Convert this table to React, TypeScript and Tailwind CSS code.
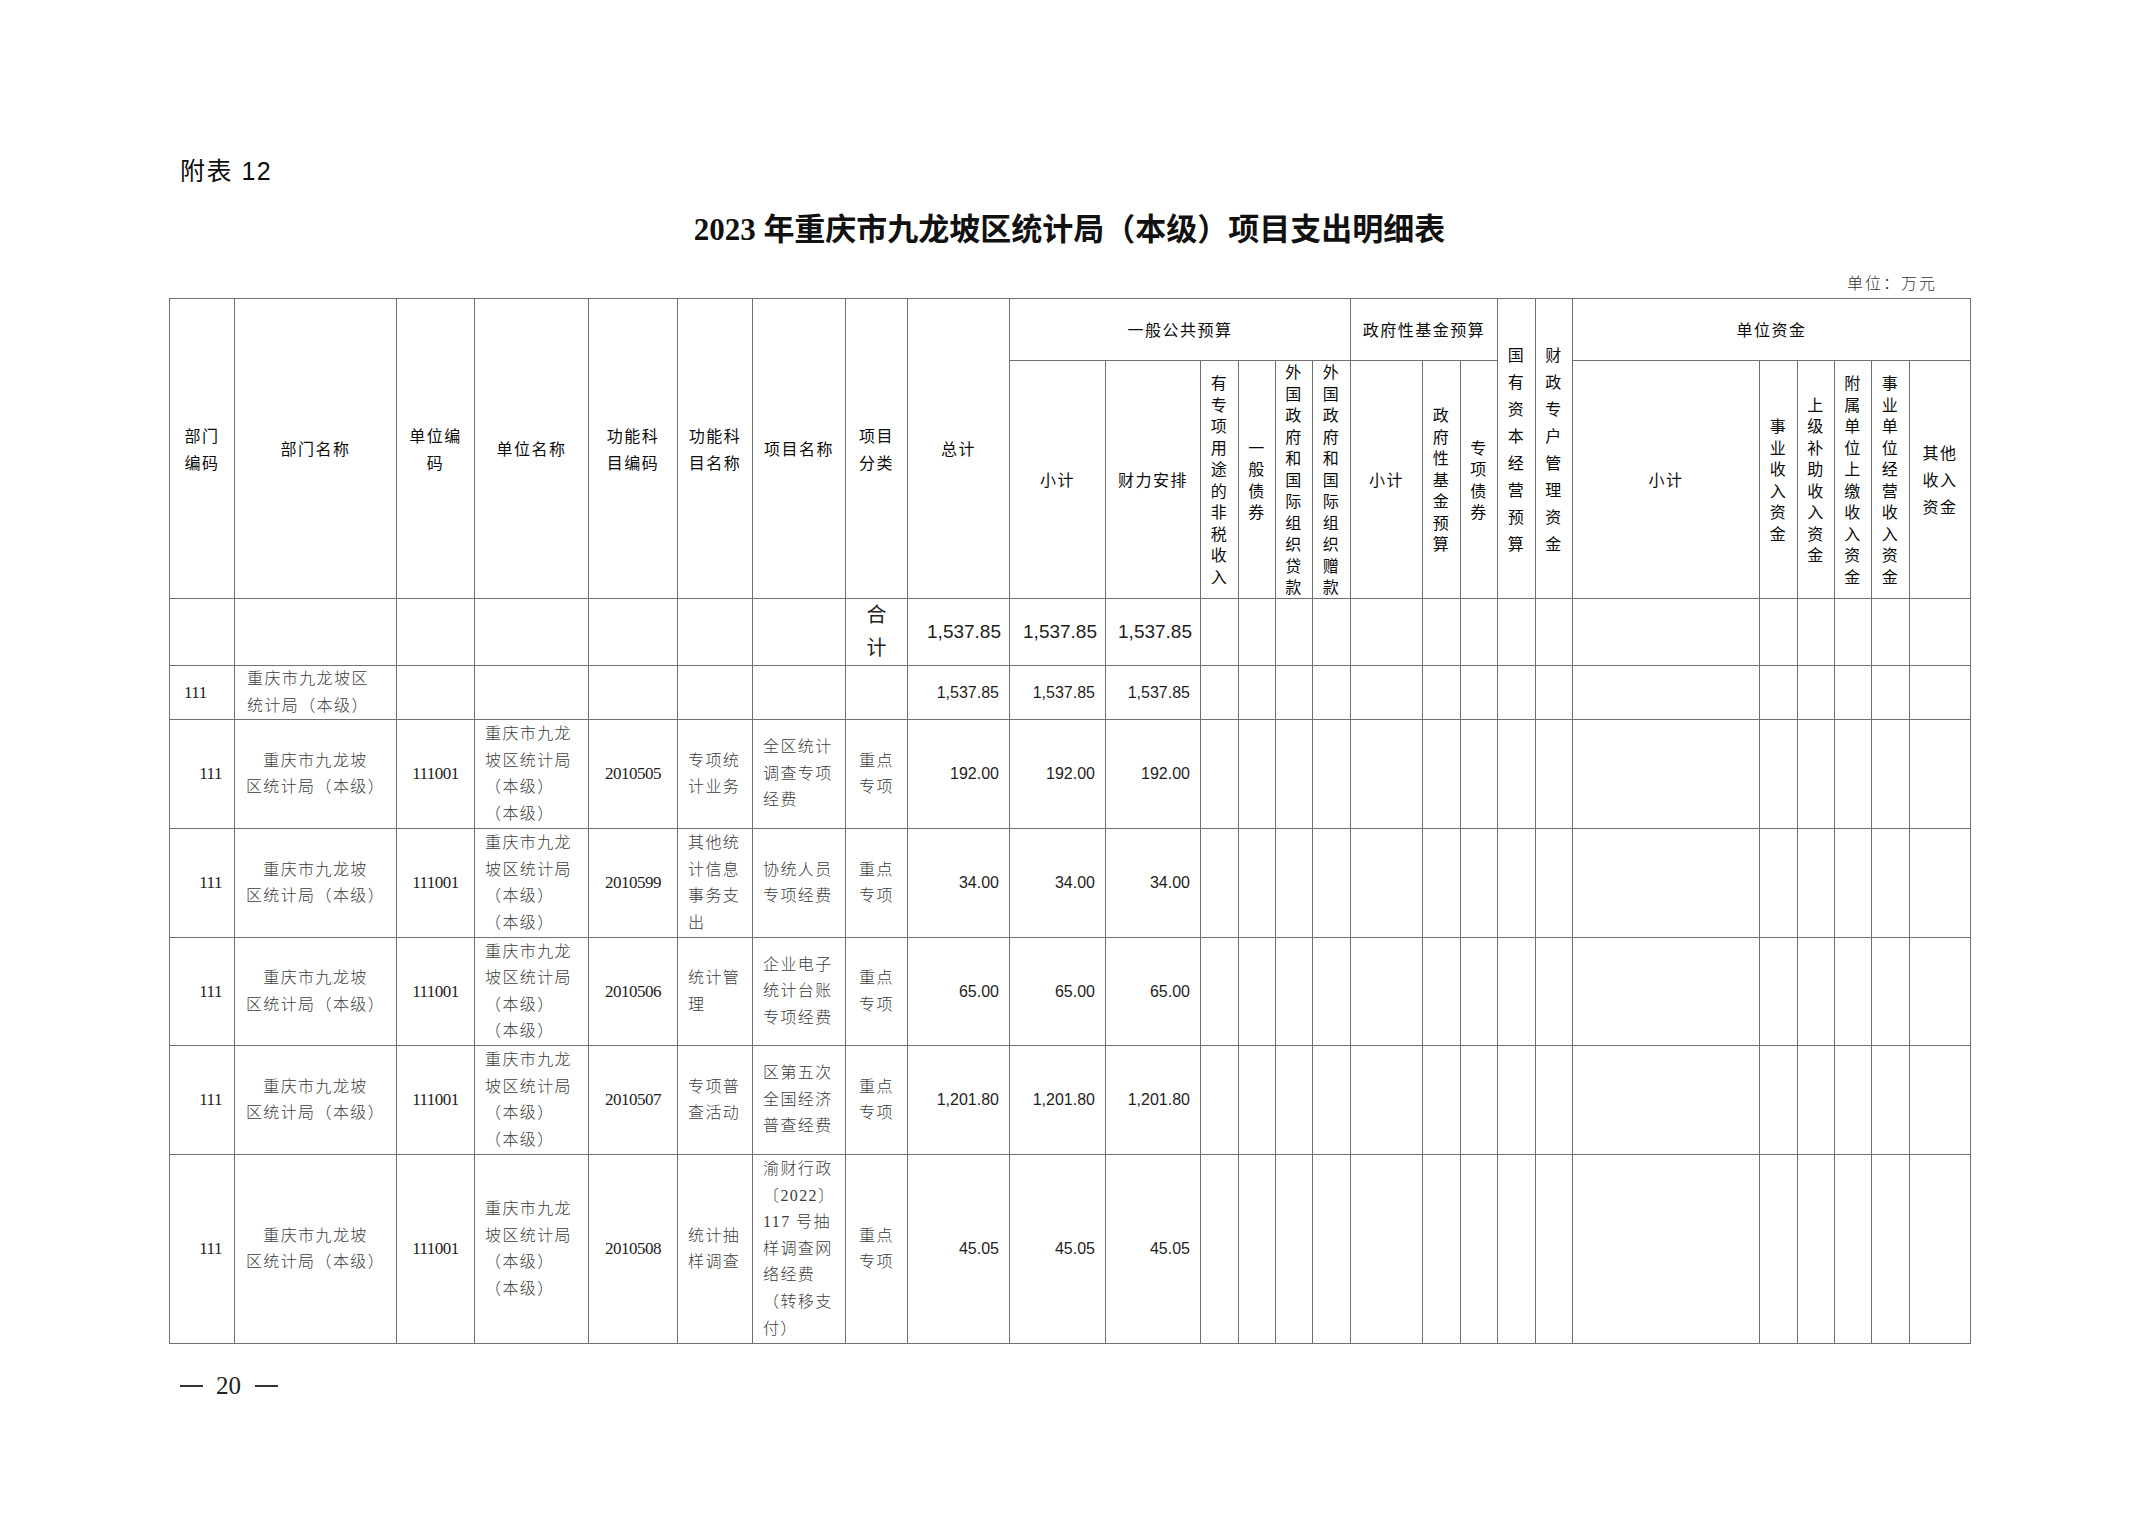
import React from "react";

const HC =
  "border border-[#707070] p-0 text-center align-middle font-normal text-[16px] leading-[26.7px] tracking-[1.5px] text-[#0c0c0c] font-['Noto_Sans_CJK_SC','Noto_Sans',sans-serif]";
const BC = "border border-[#707070] p-0 align-middle";
const SONG =
  "font-['Liberation_Serif','Noto_Sans_CJK_SC',serif] font-light text-[16px] leading-[26.6px] tracking-[1.4px] text-[#3c3c3c]";
const CODE = "font-['Liberation_Serif',serif] text-[17px] tracking-[-0.5px] text-[#222]";
const NUM = "font-['Liberation_Sans',Arial,sans-serif] text-[16px] text-[#1e1e1e] text-right pr-[10px]";

function Lines({ lines }: { lines: string[] }) {
  return (
    <>
      {lines.map((l, i) => (
        <div key={i} className="whitespace-nowrap">
          {l}
        </div>
      ))}
    </>
  );
}

function V({ t, wide }: { t: string; wide?: boolean }) {
  return (
    <div className="flex flex-col items-center">
      {Array.from(t).map((c, i) => (
        <span key={i} className={wide ? "block leading-[27px]" : "block leading-[21.5px]"}>
          {c}
        </span>
      ))}
    </div>
  );
}

type Row = {
  h: string;
  unitName: string[];
  code: string;
  funcName: string[];
  proj: string[];
  amt: string;
};

const rows: Row[] = [
  {
    h: "h-[109px]",
    unitName: ["重庆市九龙", "坡区统计局", "（本级）", "（本级）"],
    code: "2010505",
    funcName: ["专项统", "计业务"],
    proj: ["全区统计", "调查专项", "经费"],
    amt: "192.00",
  },
  {
    h: "h-[109px]",
    unitName: ["重庆市九龙", "坡区统计局", "（本级）", "（本级）"],
    code: "2010599",
    funcName: ["其他统", "计信息", "事务支", "出"],
    proj: ["协统人员", "专项经费"],
    amt: "34.00",
  },
  {
    h: "h-[108px]",
    unitName: ["重庆市九龙", "坡区统计局", "（本级）", "（本级）"],
    code: "2010506",
    funcName: ["统计管", "理"],
    proj: ["企业电子", "统计台账", "专项经费"],
    amt: "65.00",
  },
  {
    h: "h-[109px]",
    unitName: ["重庆市九龙", "坡区统计局", "（本级）", "（本级）"],
    code: "2010507",
    funcName: ["专项普", "查活动"],
    proj: ["区第五次", "全国经济", "普查经费"],
    amt: "1,201.80",
  },
  {
    h: "h-[189px]",
    unitName: ["重庆市九龙", "坡区统计局", "（本级）", "（本级）"],
    code: "2010508",
    funcName: ["统计抽", "样调查"],
    proj: ["渝财行政", "〔2022〕", "117 号抽", "样调查网", "络经费", "（转移支", "付）"],
    amt: "45.05",
  },
];

function Empty({ n }: { n: number }) {
  return (
    <>
      {Array.from({ length: n }).map((_, i) => (
        <td key={i} className={BC}></td>
      ))}
    </>
  );
}

export default function App() {
  return (
    <div className="w-[2149px] h-[1520px] bg-white pl-[169px] overflow-hidden">
      <div className="w-[1801px]">
        <div className="mt-[156px] ml-[11px] text-[25px] leading-[30px] text-[#0c0c0c] font-['Liberation_Sans','Noto_Sans_CJK_SC',sans-serif] tracking-[1.5px]">
          附表 12
        </div>
        <div className="mt-[26px] text-center text-[31px] leading-[36px] font-bold text-[#111] font-['Liberation_Serif','Noto_Sans_CJK_SC',serif]">
          2023 年重庆市九龙坡区统计局（本级）项目支出明细表
        </div>
        <div className="mt-[24px] text-right pr-[33px] text-[16px] leading-[20px] tracking-[2px] text-[#333] font-light font-['Noto_Sans_CJK_SC',sans-serif]">
          单位：万元
        </div>
        <table className="mt-[6px] w-[1801px] table-fixed border-collapse">
          <colgroup>
            <col className="w-[65px]" />
            <col className="w-[162px]" />
            <col className="w-[78px]" />
            <col className="w-[114px]" />
            <col className="w-[89px]" />
            <col className="w-[75px]" />
            <col className="w-[93px]" />
            <col className="w-[62px]" />
            <col className="w-[102px]" />
            <col className="w-[96px]" />
            <col className="w-[95px]" />
            <col className="w-[38px]" />
            <col className="w-[37px]" />
            <col className="w-[37px]" />
            <col className="w-[38px]" />
            <col className="w-[72px]" />
            <col className="w-[38px]" />
            <col className="w-[37px]" />
            <col className="w-[38px]" />
            <col className="w-[37px]" />
            <col className="w-[187px]" />
            <col className="w-[38px]" />
            <col className="w-[37px]" />
            <col className="w-[37px]" />
            <col className="w-[38px]" />
            <col className="w-[61px]" />
          </colgroup>
          <thead>
            <tr className="h-[62px]">
              <th rowSpan={2} className={HC}>
                <Lines lines={["部门", "编码"]} />
              </th>
              <th rowSpan={2} className={HC}>部门名称</th>
              <th rowSpan={2} className={HC}>
                <Lines lines={["单位编", "码"]} />
              </th>
              <th rowSpan={2} className={HC}>单位名称</th>
              <th rowSpan={2} className={HC}>
                <Lines lines={["功能科", "目编码"]} />
              </th>
              <th rowSpan={2} className={HC}>
                <Lines lines={["功能科", "目名称"]} />
              </th>
              <th rowSpan={2} className={HC}>项目名称</th>
              <th rowSpan={2} className={HC}>
                <Lines lines={["项目", "分类"]} />
              </th>
              <th rowSpan={2} className={HC}>总计</th>
              <th colSpan={6} className={HC}>一般公共预算</th>
              <th colSpan={3} className={HC}>政府性基金预算</th>
              <th rowSpan={2} className={HC}>
                <V t="国有资本经营预算" wide />
              </th>
              <th rowSpan={2} className={HC}>
                <V t="财政专户管理资金" wide />
              </th>
              <th colSpan={6} className={HC}>单位资金</th>
            </tr>
            <tr className="h-[238px]">
              <th className={HC}>小计</th>
              <th className={HC}>财力安排</th>
              <th className={HC}>
                <V t="有专项用途的非税收入" />
              </th>
              <th className={HC}>
                <V t="一般债券" />
              </th>
              <th className={HC}>
                <V t="外国政府和国际组织贷款" />
              </th>
              <th className={HC}>
                <V t="外国政府和国际组织赠款" />
              </th>
              <th className={HC}>小计</th>
              <th className={HC}>
                <V t="政府性基金预算" />
              </th>
              <th className={HC}>
                <V t="专项债券" />
              </th>
              <th className={HC}>小计</th>
              <th className={HC}>
                <V t="事业收入资金" />
              </th>
              <th className={HC}>
                <V t="上级补助收入资金" />
              </th>
              <th className={HC}>
                <V t="附属单位上缴收入资金" />
              </th>
              <th className={HC}>
                <V t="事业单位经营收入资金" />
              </th>
              <th className={HC}>
                <Lines lines={["其他", "收入", "资金"]} />
              </th>
            </tr>
          </thead>
          <tbody>
            <tr className="h-[67px]">
              <Empty n={7} />
              <td className={BC}>
                <div className="text-center text-[20px] leading-[33px] text-[#222] font-['Liberation_Serif','Noto_Sans_CJK_SC',serif]">
                  <div>合</div>
                  <div>计</div>
                </div>
              </td>
              <td className={`${BC} font-['Liberation_Sans',Arial,sans-serif] text-[19px] text-[#1e1e1e] text-right pr-[8px]`}>1,537.85</td>
              <td className={`${BC} font-['Liberation_Sans',Arial,sans-serif] text-[19px] text-[#1e1e1e] text-right pr-[8px]`}>1,537.85</td>
              <td className={`${BC} font-['Liberation_Sans',Arial,sans-serif] text-[19px] text-[#1e1e1e] text-right pr-[8px]`}>1,537.85</td>
              <Empty n={15} />
            </tr>
            <tr className="h-[53px]">
              <td className={`${BC} ${CODE} text-left pl-[14px]`}>111</td>
              <td className={`${BC} pl-[12px]`}>
                <div className={SONG}>
                  <Lines lines={["重庆市九龙坡区", "统计局（本级）"]} />
                </div>
              </td>
              <Empty n={6} />
              <td className={`${BC} ${NUM}`}>1,537.85</td>
              <td className={`${BC} ${NUM}`}>1,537.85</td>
              <td className={`${BC} ${NUM}`}>1,537.85</td>
              <Empty n={15} />
            </tr>
            {rows.map((r, i) => (
              <tr key={i} className={r.h}>
                <td className={`${BC} ${CODE} text-right pr-[12px]`}>111</td>
                <td className={`${BC} text-center`}>
                  <div className={SONG}>
                    <Lines lines={["重庆市九龙坡", "区统计局（本级）"]} />
                  </div>
                </td>
                <td className={`${BC} ${CODE} text-center`}>111001</td>
                <td className={`${BC} pl-[10px]`}>
                  <div className={SONG}>
                    <Lines lines={r.unitName} />
                  </div>
                </td>
                <td className={`${BC} ${CODE} text-center`}>{r.code}</td>
                <td className={`${BC} pl-[10px]`}>
                  <div className={SONG}>
                    <Lines lines={r.funcName} />
                  </div>
                </td>
                <td className={`${BC} pl-[10px]`}>
                  <div className={SONG}>
                    <Lines lines={r.proj} />
                  </div>
                </td>
                <td className={`${BC} text-center`}>
                  <div className={SONG}>
                    <Lines lines={["重点", "专项"]} />
                  </div>
                </td>
                <td className={`${BC} ${NUM}`}>{r.amt}</td>
                <td className={`${BC} ${NUM}`}>{r.amt}</td>
                <td className={`${BC} ${NUM}`}>{r.amt}</td>
                <Empty n={15} />
              </tr>
            ))}
          </tbody>
        </table>
        <div className="mt-[27px] ml-[11px] flex items-center text-[25px] leading-[30px] text-[#222] font-['Liberation_Serif',serif]">
          <span className="block w-[23px] h-[1.5px] bg-[#333]"></span>
          <span className="ml-[13px] mr-[14px]">20</span>
          <span className="block w-[23px] h-[1.5px] bg-[#333]"></span>
        </div>
      </div>
    </div>
  );
}
